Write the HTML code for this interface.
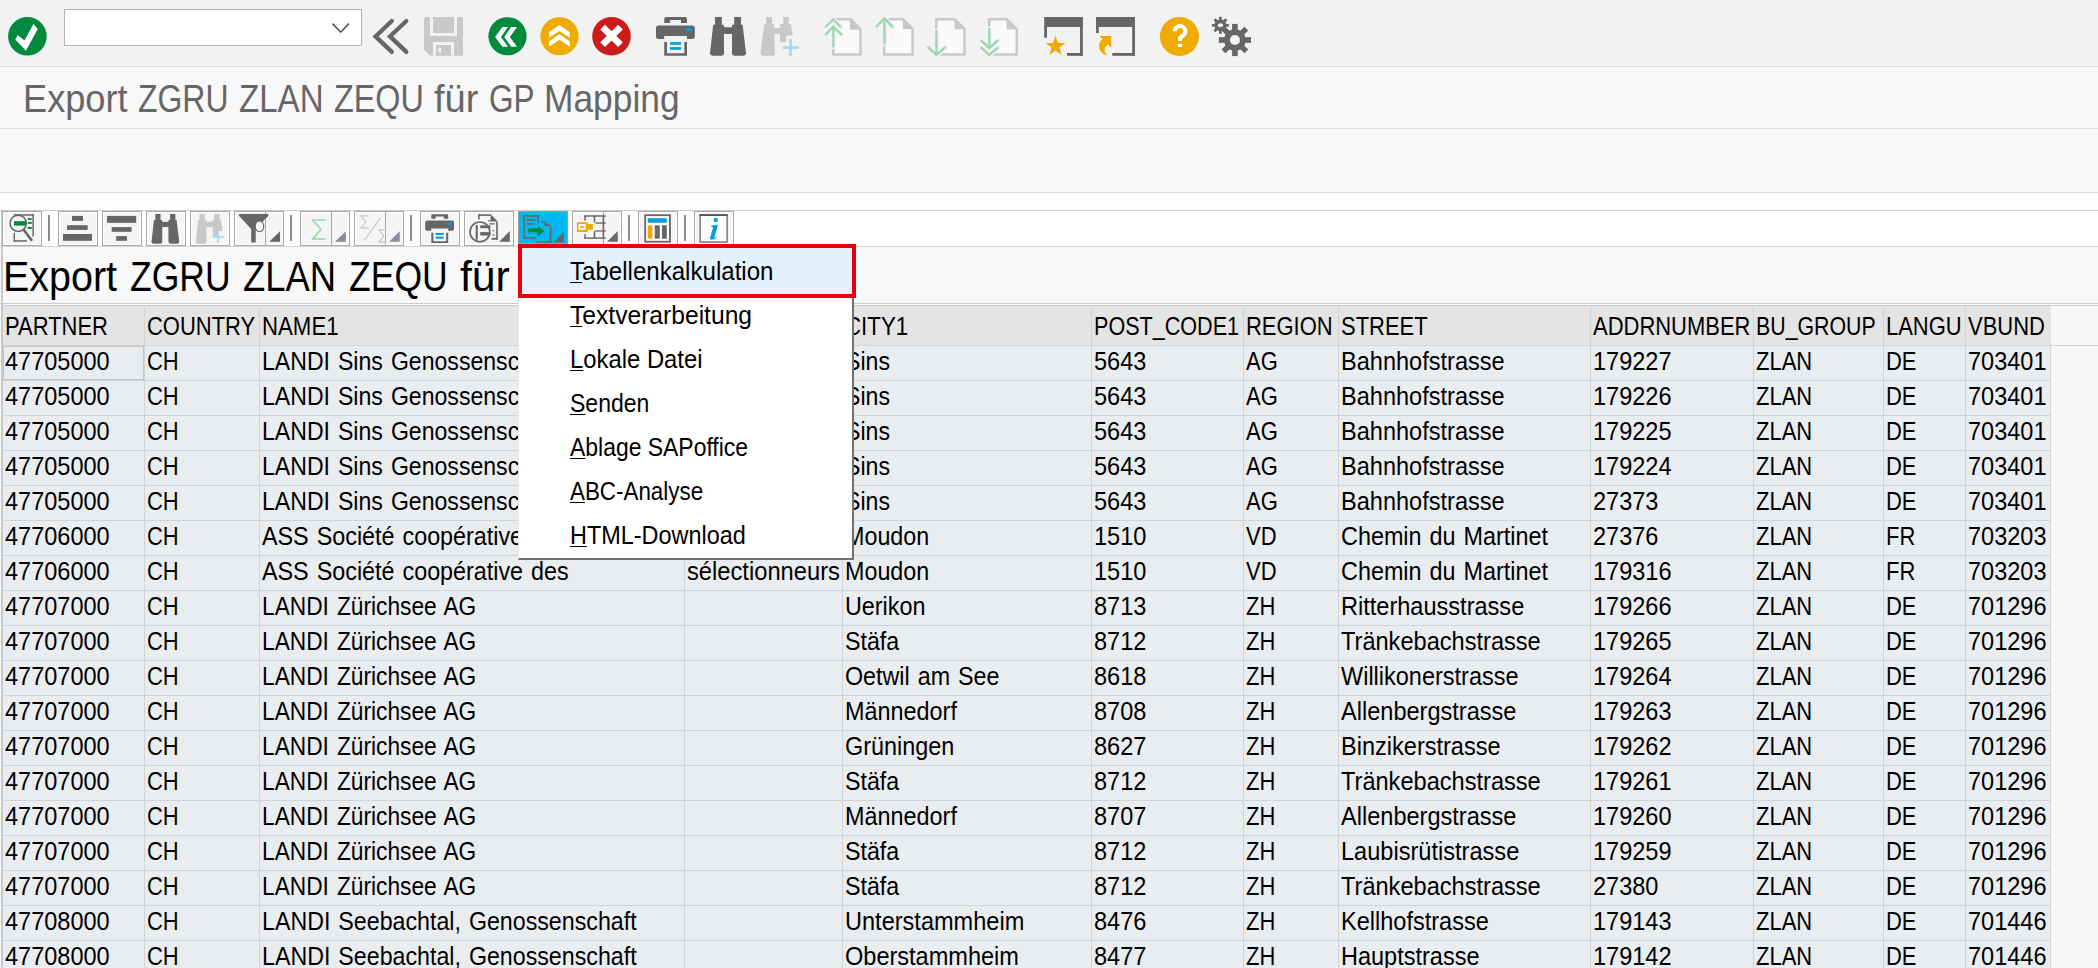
<!DOCTYPE html><html><head><meta charset="utf-8"><style>html,body{margin:0;padding:0}
body{width:2098px;height:968px;overflow:hidden;position:relative;background:#f7f7f7;font-family:"Liberation Sans",sans-serif;color:#000}
div{position:absolute;box-sizing:border-box}
#tb{left:0;top:0;width:2098px;height:67px;background:#f2f2f2;border-bottom:1px solid #dcdcdc}
#tl{left:0;top:67px;width:2098px;height:62px;background:#f8f8f8;border-bottom:1px solid #e2e2e2}
.ttl{left:22.5px;top:76.5px;font-size:37.8px;line-height:44px;color:#666;white-space:nowrap;transform:scaleX(.908);transform-origin:0 0}
#ar{left:0;top:129px;width:2098px;height:64px;background:#f8f8f8;border-bottom:1px solid #d9d9d9}
#cont{left:0;top:193px;width:2098px;height:18px;background:#fdfdfd;border-bottom:1px solid #cccccc}
#atb{left:0;top:211px;width:2098px;height:36px;background:#fff;border-bottom:1px solid #d4d4d4}
#atl{left:0;top:247px;width:2098px;height:57px;background:#f8f8f8;border-bottom:1px solid #cbcbcb;box-shadow:0 1px 0 #fbfbfb}
.attl{left:3.5px;top:253px;font-size:42px;line-height:48px;white-space:nowrap;transform:scaleX(.905);transform-origin:0 0}
#grid{left:0;top:0;width:2098px;height:968px}
.hbg{background:#e4e4e4;border-top:1px solid #cbcbcb}
.rbg{left:3px;width:2047px;height:35px;background:#eaedf0}
.vl{width:1px;background:#d3d3d3}
.hl{height:1px;background:#d3d3d3}
.hc{font-size:26px;line-height:30px;white-space:nowrap}
.hc span{display:inline-block;transform:scaleX(.84);transform-origin:0 0}
.c{font-size:26px;line-height:30px;white-space:nowrap;overflow:hidden;height:34px}
.c span{display:inline-block;transform:scaleX(.89);transform-origin:0 0}
#focus{left:3px;top:346px;width:141px;height:34px;border:1px solid #c4c4c4}
#lb{left:1px;top:211px;width:2px;height:757px;background:#c8c8c8}
#menu{left:518px;top:244px;width:336px;height:316px;background:#fff;border-left:1px solid #e8e8e8;border-right:2px solid #707070;border-bottom:2px solid #707070}
.mi{left:51px;width:280px;height:44px;padding-top:12px;font-size:26px;line-height:30px;white-space:nowrap}
.mi span{display:inline-block;transform:scaleX(.91);transform-origin:0 0}
.mi u{text-decoration-thickness:1px;text-underline-offset:2px}
#sel{left:-1px;top:0;width:338px;height:54px;border:4px solid #e5000b;background:#e5f1fa}
.btn{top:211px;height:35px;border:1px solid #a9a9a9;background:#f5f5f5;box-shadow:inset 0 0 0 1px #fff}
.sep{top:215px;width:2px;height:26px;background:#8a8a8a}
.dv{top:211px;width:1px;height:35px;background:#a9a9a9}
svg{position:absolute;left:0;top:0}
.tw{line-height:1;white-space:nowrap;transform-origin:0 0}
</style></head><body>
<div id="tb"></div><div id="tl"></div><div class="tw" style="left:22.73px;top:81.02px;font-size:37.90px;transform:scaleX(0.9552);color:#666">Export</div><div class="tw" style="left:138.28px;top:81.02px;font-size:37.90px;transform:scaleX(0.8427);color:#666">ZGRU</div><div class="tw" style="left:238.94px;top:81.02px;font-size:37.90px;transform:scaleX(0.8727);color:#666">ZLAN</div><div class="tw" style="left:333.96px;top:81.02px;font-size:37.90px;transform:scaleX(0.8541);color:#666">ZEQU</div><div class="tw" style="left:434.07px;top:81.02px;font-size:37.90px;transform:scaleX(1.0034);color:#666">für</div><div class="tw" style="left:488.62px;top:81.02px;font-size:37.90px;transform:scaleX(0.8317);color:#666">GP</div><div class="tw" style="left:543.70px;top:81.02px;font-size:37.90px;transform:scaleX(0.9331);color:#666">Mapping</div><div id="ar"></div>
<div id="cont"></div><div id="atb"></div>
<div id="atl"></div><div class="tw" style="left:3.16px;top:256.00px;font-size:41.70px;transform:scaleX(0.9469);">Export</div><div class="tw" style="left:129.86px;top:256.00px;font-size:41.70px;transform:scaleX(0.8522);">ZGRU</div><div class="tw" style="left:242.83px;top:256.00px;font-size:41.70px;transform:scaleX(0.8746);">ZLAN</div><div class="tw" style="left:348.96px;top:256.00px;font-size:41.70px;transform:scaleX(0.8527);">ZEQU</div><div class="tw" style="left:459.90px;top:256.00px;font-size:41.70px;transform:scaleX(1.0238);">für</div><div class="tw" style="left:523.32px;top:256.00px;font-size:41.70px;transform:scaleX(0.8041);">GP</div><div class="tw" style="left:582.00px;top:256.00px;font-size:41.70px;transform:scaleX(0.8773);">Mapping</div>
<div id="grid">
<div class="hbg" style="left:3px;top:305px;width:2048px;height:40px"></div><div class="hl" style="left:3px;top:305px;width:2095px;background:#cbcbcb"></div>
<div class="vl" style="left:2px;top:305px;height:40px"></div>
<div class="hc" style="left:5px;top:311px"><span style="transform:scaleX(0.8450)">PARTNER</span></div>
<div class="vl" style="left:144px;top:305px;height:40px"></div>
<div class="hc" style="left:147px;top:311px"><span style="transform:scaleX(0.8450)">COUNTRY</span></div>
<div class="vl" style="left:259px;top:305px;height:40px"></div>
<div class="hc" style="left:262px;top:311px"><span style="transform:scaleX(0.8547)">NAME1</span></div>
<div class="vl" style="left:684px;top:305px;height:40px"></div>
<div class="vl" style="left:842px;top:305px;height:40px"></div>
<div class="hc" style="left:845px;top:311px"><span style="transform:scaleX(0.8568)">CITY1</span></div>
<div class="vl" style="left:1091px;top:305px;height:40px"></div>
<div class="hc" style="left:1094px;top:311px"><span style="transform:scaleX(0.8297)">POST_CODE1</span></div>
<div class="vl" style="left:1243px;top:305px;height:40px"></div>
<div class="hc" style="left:1246px;top:311px"><span style="transform:scaleX(0.8450)">REGION</span></div>
<div class="vl" style="left:1338px;top:305px;height:40px"></div>
<div class="hc" style="left:1341px;top:311px"><span style="transform:scaleX(0.8450)">STREET</span></div>
<div class="vl" style="left:1590px;top:305px;height:40px"></div>
<div class="hc" style="left:1593px;top:311px"><span style="transform:scaleX(0.8450)">ADDRNUMBER</span></div>
<div class="vl" style="left:1753px;top:305px;height:40px"></div>
<div class="hc" style="left:1756px;top:311px"><span style="transform:scaleX(0.8207)">BU_GROUP</span></div>
<div class="vl" style="left:1883px;top:305px;height:40px"></div>
<div class="hc" style="left:1886px;top:311px"><span style="transform:scaleX(0.8450)">LANGU</span></div>
<div class="vl" style="left:1965px;top:305px;height:40px"></div>
<div class="hc" style="left:1968px;top:311px"><span style="transform:scaleX(0.8450)">VBUND</span></div>
<div class="hl" style="left:2px;top:345px;width:2096px"></div>
<div class="rbg" style="top:346px"></div>
<div class="c" style="left:5px;top:346px;width:139px"><span style="transform:scaleX(0.9050)">47705000</span></div>
<div class="c" style="left:147px;top:346px;width:112px"><span style="transform:scaleX(0.8450)">CH</span></div>
<div class="c" style="left:262px;top:346px;width:422px"><span style="transform:scaleX(0.8877);word-spacing:1.79px">LANDI Sins Genossenschaft</span></div>
<div class="c" style="left:845px;top:346px;width:246px"><span style="transform:scaleX(0.8890)">Sins</span></div>
<div class="c" style="left:1094px;top:346px;width:149px"><span style="transform:scaleX(0.9050)">5643</span></div>
<div class="c" style="left:1246px;top:346px;width:92px"><span style="transform:scaleX(0.8450)">AG</span></div>
<div class="c" style="left:1341px;top:346px;width:249px"><span style="transform:scaleX(0.9056)">Bahnhofstrasse</span></div>
<div class="c" style="left:1593px;top:346px;width:160px"><span style="transform:scaleX(0.9050)">179227</span></div>
<div class="c" style="left:1756px;top:346px;width:127px"><span style="transform:scaleX(0.8450)">ZLAN</span></div>
<div class="c" style="left:1886px;top:346px;width:79px"><span style="transform:scaleX(0.8450)">DE</span></div>
<div class="c" style="left:1968px;top:346px;width:82px"><span style="transform:scaleX(0.9050)">703401</span></div>
<div class="rbg" style="top:381px"></div>
<div class="c" style="left:5px;top:381px;width:139px"><span style="transform:scaleX(0.9050)">47705000</span></div>
<div class="c" style="left:147px;top:381px;width:112px"><span style="transform:scaleX(0.8450)">CH</span></div>
<div class="c" style="left:262px;top:381px;width:422px"><span style="transform:scaleX(0.8877);word-spacing:1.79px">LANDI Sins Genossenschaft</span></div>
<div class="c" style="left:845px;top:381px;width:246px"><span style="transform:scaleX(0.8890)">Sins</span></div>
<div class="c" style="left:1094px;top:381px;width:149px"><span style="transform:scaleX(0.9050)">5643</span></div>
<div class="c" style="left:1246px;top:381px;width:92px"><span style="transform:scaleX(0.8450)">AG</span></div>
<div class="c" style="left:1341px;top:381px;width:249px"><span style="transform:scaleX(0.9056)">Bahnhofstrasse</span></div>
<div class="c" style="left:1593px;top:381px;width:160px"><span style="transform:scaleX(0.9050)">179226</span></div>
<div class="c" style="left:1756px;top:381px;width:127px"><span style="transform:scaleX(0.8450)">ZLAN</span></div>
<div class="c" style="left:1886px;top:381px;width:79px"><span style="transform:scaleX(0.8450)">DE</span></div>
<div class="c" style="left:1968px;top:381px;width:82px"><span style="transform:scaleX(0.9050)">703401</span></div>
<div class="rbg" style="top:416px"></div>
<div class="c" style="left:5px;top:416px;width:139px"><span style="transform:scaleX(0.9050)">47705000</span></div>
<div class="c" style="left:147px;top:416px;width:112px"><span style="transform:scaleX(0.8450)">CH</span></div>
<div class="c" style="left:262px;top:416px;width:422px"><span style="transform:scaleX(0.8877);word-spacing:1.79px">LANDI Sins Genossenschaft</span></div>
<div class="c" style="left:845px;top:416px;width:246px"><span style="transform:scaleX(0.8890)">Sins</span></div>
<div class="c" style="left:1094px;top:416px;width:149px"><span style="transform:scaleX(0.9050)">5643</span></div>
<div class="c" style="left:1246px;top:416px;width:92px"><span style="transform:scaleX(0.8450)">AG</span></div>
<div class="c" style="left:1341px;top:416px;width:249px"><span style="transform:scaleX(0.9056)">Bahnhofstrasse</span></div>
<div class="c" style="left:1593px;top:416px;width:160px"><span style="transform:scaleX(0.9050)">179225</span></div>
<div class="c" style="left:1756px;top:416px;width:127px"><span style="transform:scaleX(0.8450)">ZLAN</span></div>
<div class="c" style="left:1886px;top:416px;width:79px"><span style="transform:scaleX(0.8450)">DE</span></div>
<div class="c" style="left:1968px;top:416px;width:82px"><span style="transform:scaleX(0.9050)">703401</span></div>
<div class="rbg" style="top:451px"></div>
<div class="c" style="left:5px;top:451px;width:139px"><span style="transform:scaleX(0.9050)">47705000</span></div>
<div class="c" style="left:147px;top:451px;width:112px"><span style="transform:scaleX(0.8450)">CH</span></div>
<div class="c" style="left:262px;top:451px;width:422px"><span style="transform:scaleX(0.8877);word-spacing:1.79px">LANDI Sins Genossenschaft</span></div>
<div class="c" style="left:845px;top:451px;width:246px"><span style="transform:scaleX(0.8890)">Sins</span></div>
<div class="c" style="left:1094px;top:451px;width:149px"><span style="transform:scaleX(0.9050)">5643</span></div>
<div class="c" style="left:1246px;top:451px;width:92px"><span style="transform:scaleX(0.8450)">AG</span></div>
<div class="c" style="left:1341px;top:451px;width:249px"><span style="transform:scaleX(0.9056)">Bahnhofstrasse</span></div>
<div class="c" style="left:1593px;top:451px;width:160px"><span style="transform:scaleX(0.9050)">179224</span></div>
<div class="c" style="left:1756px;top:451px;width:127px"><span style="transform:scaleX(0.8450)">ZLAN</span></div>
<div class="c" style="left:1886px;top:451px;width:79px"><span style="transform:scaleX(0.8450)">DE</span></div>
<div class="c" style="left:1968px;top:451px;width:82px"><span style="transform:scaleX(0.9050)">703401</span></div>
<div class="rbg" style="top:486px"></div>
<div class="c" style="left:5px;top:486px;width:139px"><span style="transform:scaleX(0.9050)">47705000</span></div>
<div class="c" style="left:147px;top:486px;width:112px"><span style="transform:scaleX(0.8450)">CH</span></div>
<div class="c" style="left:262px;top:486px;width:422px"><span style="transform:scaleX(0.8877);word-spacing:1.79px">LANDI Sins Genossenschaft</span></div>
<div class="c" style="left:845px;top:486px;width:246px"><span style="transform:scaleX(0.8890)">Sins</span></div>
<div class="c" style="left:1094px;top:486px;width:149px"><span style="transform:scaleX(0.9050)">5643</span></div>
<div class="c" style="left:1246px;top:486px;width:92px"><span style="transform:scaleX(0.8450)">AG</span></div>
<div class="c" style="left:1341px;top:486px;width:249px"><span style="transform:scaleX(0.9056)">Bahnhofstrasse</span></div>
<div class="c" style="left:1593px;top:486px;width:160px"><span style="transform:scaleX(0.9050)">27373</span></div>
<div class="c" style="left:1756px;top:486px;width:127px"><span style="transform:scaleX(0.8450)">ZLAN</span></div>
<div class="c" style="left:1886px;top:486px;width:79px"><span style="transform:scaleX(0.8450)">DE</span></div>
<div class="c" style="left:1968px;top:486px;width:82px"><span style="transform:scaleX(0.9050)">703401</span></div>
<div class="rbg" style="top:521px"></div>
<div class="c" style="left:5px;top:521px;width:139px"><span style="transform:scaleX(0.9050)">47706000</span></div>
<div class="c" style="left:147px;top:521px;width:112px"><span style="transform:scaleX(0.8450)">CH</span></div>
<div class="c" style="left:262px;top:521px;width:422px"><span style="transform:scaleX(0.8972);word-spacing:1.70px">ASS Société coopérative des</span></div>
<div class="c" style="left:687px;top:521px;width:155px"><span style="transform:scaleX(0.9120)">sélectionneurs</span></div>
<div class="c" style="left:845px;top:521px;width:246px"><span style="transform:scaleX(0.8966)">Moudon</span></div>
<div class="c" style="left:1094px;top:521px;width:149px"><span style="transform:scaleX(0.9050)">1510</span></div>
<div class="c" style="left:1246px;top:521px;width:92px"><span style="transform:scaleX(0.8450)">VD</span></div>
<div class="c" style="left:1341px;top:521px;width:249px"><span style="transform:scaleX(0.8992);word-spacing:1.68px">Chemin du Martinet</span></div>
<div class="c" style="left:1593px;top:521px;width:160px"><span style="transform:scaleX(0.9050)">27376</span></div>
<div class="c" style="left:1756px;top:521px;width:127px"><span style="transform:scaleX(0.8450)">ZLAN</span></div>
<div class="c" style="left:1886px;top:521px;width:79px"><span style="transform:scaleX(0.8450)">FR</span></div>
<div class="c" style="left:1968px;top:521px;width:82px"><span style="transform:scaleX(0.9050)">703203</span></div>
<div class="rbg" style="top:556px"></div>
<div class="c" style="left:5px;top:556px;width:139px"><span style="transform:scaleX(0.9050)">47706000</span></div>
<div class="c" style="left:147px;top:556px;width:112px"><span style="transform:scaleX(0.8450)">CH</span></div>
<div class="c" style="left:262px;top:556px;width:422px"><span style="transform:scaleX(0.8972);word-spacing:1.70px">ASS Société coopérative des</span></div>
<div class="c" style="left:687px;top:556px;width:155px"><span style="transform:scaleX(0.9120)">sélectionneurs</span></div>
<div class="c" style="left:845px;top:556px;width:246px"><span style="transform:scaleX(0.8966)">Moudon</span></div>
<div class="c" style="left:1094px;top:556px;width:149px"><span style="transform:scaleX(0.9050)">1510</span></div>
<div class="c" style="left:1246px;top:556px;width:92px"><span style="transform:scaleX(0.8450)">VD</span></div>
<div class="c" style="left:1341px;top:556px;width:249px"><span style="transform:scaleX(0.8992);word-spacing:1.68px">Chemin du Martinet</span></div>
<div class="c" style="left:1593px;top:556px;width:160px"><span style="transform:scaleX(0.9050)">179316</span></div>
<div class="c" style="left:1756px;top:556px;width:127px"><span style="transform:scaleX(0.8450)">ZLAN</span></div>
<div class="c" style="left:1886px;top:556px;width:79px"><span style="transform:scaleX(0.8450)">FR</span></div>
<div class="c" style="left:1968px;top:556px;width:82px"><span style="transform:scaleX(0.9050)">703203</span></div>
<div class="rbg" style="top:591px"></div>
<div class="c" style="left:5px;top:591px;width:139px"><span style="transform:scaleX(0.9050)">47707000</span></div>
<div class="c" style="left:147px;top:591px;width:112px"><span style="transform:scaleX(0.8450)">CH</span></div>
<div class="c" style="left:262px;top:591px;width:422px"><span style="transform:scaleX(0.8738);word-spacing:1.94px">LANDI Zürichsee AG</span></div>
<div class="c" style="left:845px;top:591px;width:246px"><span style="transform:scaleX(0.8980)">Uerikon</span></div>
<div class="c" style="left:1094px;top:591px;width:149px"><span style="transform:scaleX(0.9050)">8713</span></div>
<div class="c" style="left:1246px;top:591px;width:92px"><span style="transform:scaleX(0.8450)">ZH</span></div>
<div class="c" style="left:1341px;top:591px;width:249px"><span style="transform:scaleX(0.9058)">Ritterhausstrasse</span></div>
<div class="c" style="left:1593px;top:591px;width:160px"><span style="transform:scaleX(0.9050)">179266</span></div>
<div class="c" style="left:1756px;top:591px;width:127px"><span style="transform:scaleX(0.8450)">ZLAN</span></div>
<div class="c" style="left:1886px;top:591px;width:79px"><span style="transform:scaleX(0.8450)">DE</span></div>
<div class="c" style="left:1968px;top:591px;width:82px"><span style="transform:scaleX(0.9050)">701296</span></div>
<div class="rbg" style="top:626px"></div>
<div class="c" style="left:5px;top:626px;width:139px"><span style="transform:scaleX(0.9050)">47707000</span></div>
<div class="c" style="left:147px;top:626px;width:112px"><span style="transform:scaleX(0.8450)">CH</span></div>
<div class="c" style="left:262px;top:626px;width:422px"><span style="transform:scaleX(0.8738);word-spacing:1.94px">LANDI Zürichsee AG</span></div>
<div class="c" style="left:845px;top:626px;width:246px"><span style="transform:scaleX(0.8929)">Stäfa</span></div>
<div class="c" style="left:1094px;top:626px;width:149px"><span style="transform:scaleX(0.9050)">8712</span></div>
<div class="c" style="left:1246px;top:626px;width:92px"><span style="transform:scaleX(0.8450)">ZH</span></div>
<div class="c" style="left:1341px;top:626px;width:249px"><span style="transform:scaleX(0.9072)">Tränkebachstrasse</span></div>
<div class="c" style="left:1593px;top:626px;width:160px"><span style="transform:scaleX(0.9050)">179265</span></div>
<div class="c" style="left:1756px;top:626px;width:127px"><span style="transform:scaleX(0.8450)">ZLAN</span></div>
<div class="c" style="left:1886px;top:626px;width:79px"><span style="transform:scaleX(0.8450)">DE</span></div>
<div class="c" style="left:1968px;top:626px;width:82px"><span style="transform:scaleX(0.9050)">701296</span></div>
<div class="rbg" style="top:661px"></div>
<div class="c" style="left:5px;top:661px;width:139px"><span style="transform:scaleX(0.9050)">47707000</span></div>
<div class="c" style="left:147px;top:661px;width:112px"><span style="transform:scaleX(0.8450)">CH</span></div>
<div class="c" style="left:262px;top:661px;width:422px"><span style="transform:scaleX(0.8738);word-spacing:1.94px">LANDI Zürichsee AG</span></div>
<div class="c" style="left:845px;top:661px;width:246px"><span style="transform:scaleX(0.8957);word-spacing:1.71px">Oetwil am See</span></div>
<div class="c" style="left:1094px;top:661px;width:149px"><span style="transform:scaleX(0.9050)">8618</span></div>
<div class="c" style="left:1246px;top:661px;width:92px"><span style="transform:scaleX(0.8450)">ZH</span></div>
<div class="c" style="left:1341px;top:661px;width:249px"><span style="transform:scaleX(0.9036)">Willikonerstrasse</span></div>
<div class="c" style="left:1593px;top:661px;width:160px"><span style="transform:scaleX(0.9050)">179264</span></div>
<div class="c" style="left:1756px;top:661px;width:127px"><span style="transform:scaleX(0.8450)">ZLAN</span></div>
<div class="c" style="left:1886px;top:661px;width:79px"><span style="transform:scaleX(0.8450)">DE</span></div>
<div class="c" style="left:1968px;top:661px;width:82px"><span style="transform:scaleX(0.9050)">701296</span></div>
<div class="rbg" style="top:696px"></div>
<div class="c" style="left:5px;top:696px;width:139px"><span style="transform:scaleX(0.9050)">47707000</span></div>
<div class="c" style="left:147px;top:696px;width:112px"><span style="transform:scaleX(0.8450)">CH</span></div>
<div class="c" style="left:262px;top:696px;width:422px"><span style="transform:scaleX(0.8738);word-spacing:1.94px">LANDI Zürichsee AG</span></div>
<div class="c" style="left:845px;top:696px;width:246px"><span style="transform:scaleX(0.9003)">Männedorf</span></div>
<div class="c" style="left:1094px;top:696px;width:149px"><span style="transform:scaleX(0.9050)">8708</span></div>
<div class="c" style="left:1246px;top:696px;width:92px"><span style="transform:scaleX(0.8450)">ZH</span></div>
<div class="c" style="left:1341px;top:696px;width:249px"><span style="transform:scaleX(0.9060)">Allenbergstrasse</span></div>
<div class="c" style="left:1593px;top:696px;width:160px"><span style="transform:scaleX(0.9050)">179263</span></div>
<div class="c" style="left:1756px;top:696px;width:127px"><span style="transform:scaleX(0.8450)">ZLAN</span></div>
<div class="c" style="left:1886px;top:696px;width:79px"><span style="transform:scaleX(0.8450)">DE</span></div>
<div class="c" style="left:1968px;top:696px;width:82px"><span style="transform:scaleX(0.9050)">701296</span></div>
<div class="rbg" style="top:731px"></div>
<div class="c" style="left:5px;top:731px;width:139px"><span style="transform:scaleX(0.9050)">47707000</span></div>
<div class="c" style="left:147px;top:731px;width:112px"><span style="transform:scaleX(0.8450)">CH</span></div>
<div class="c" style="left:262px;top:731px;width:422px"><span style="transform:scaleX(0.8738);word-spacing:1.94px">LANDI Zürichsee AG</span></div>
<div class="c" style="left:845px;top:731px;width:246px"><span style="transform:scaleX(0.9008)">Grüningen</span></div>
<div class="c" style="left:1094px;top:731px;width:149px"><span style="transform:scaleX(0.9050)">8627</span></div>
<div class="c" style="left:1246px;top:731px;width:92px"><span style="transform:scaleX(0.8450)">ZH</span></div>
<div class="c" style="left:1341px;top:731px;width:249px"><span style="transform:scaleX(0.9054)">Binzikerstrasse</span></div>
<div class="c" style="left:1593px;top:731px;width:160px"><span style="transform:scaleX(0.9050)">179262</span></div>
<div class="c" style="left:1756px;top:731px;width:127px"><span style="transform:scaleX(0.8450)">ZLAN</span></div>
<div class="c" style="left:1886px;top:731px;width:79px"><span style="transform:scaleX(0.8450)">DE</span></div>
<div class="c" style="left:1968px;top:731px;width:82px"><span style="transform:scaleX(0.9050)">701296</span></div>
<div class="rbg" style="top:766px"></div>
<div class="c" style="left:5px;top:766px;width:139px"><span style="transform:scaleX(0.9050)">47707000</span></div>
<div class="c" style="left:147px;top:766px;width:112px"><span style="transform:scaleX(0.8450)">CH</span></div>
<div class="c" style="left:262px;top:766px;width:422px"><span style="transform:scaleX(0.8738);word-spacing:1.94px">LANDI Zürichsee AG</span></div>
<div class="c" style="left:845px;top:766px;width:246px"><span style="transform:scaleX(0.8929)">Stäfa</span></div>
<div class="c" style="left:1094px;top:766px;width:149px"><span style="transform:scaleX(0.9050)">8712</span></div>
<div class="c" style="left:1246px;top:766px;width:92px"><span style="transform:scaleX(0.8450)">ZH</span></div>
<div class="c" style="left:1341px;top:766px;width:249px"><span style="transform:scaleX(0.9072)">Tränkebachstrasse</span></div>
<div class="c" style="left:1593px;top:766px;width:160px"><span style="transform:scaleX(0.9050)">179261</span></div>
<div class="c" style="left:1756px;top:766px;width:127px"><span style="transform:scaleX(0.8450)">ZLAN</span></div>
<div class="c" style="left:1886px;top:766px;width:79px"><span style="transform:scaleX(0.8450)">DE</span></div>
<div class="c" style="left:1968px;top:766px;width:82px"><span style="transform:scaleX(0.9050)">701296</span></div>
<div class="rbg" style="top:801px"></div>
<div class="c" style="left:5px;top:801px;width:139px"><span style="transform:scaleX(0.9050)">47707000</span></div>
<div class="c" style="left:147px;top:801px;width:112px"><span style="transform:scaleX(0.8450)">CH</span></div>
<div class="c" style="left:262px;top:801px;width:422px"><span style="transform:scaleX(0.8738);word-spacing:1.94px">LANDI Zürichsee AG</span></div>
<div class="c" style="left:845px;top:801px;width:246px"><span style="transform:scaleX(0.9003)">Männedorf</span></div>
<div class="c" style="left:1094px;top:801px;width:149px"><span style="transform:scaleX(0.9050)">8707</span></div>
<div class="c" style="left:1246px;top:801px;width:92px"><span style="transform:scaleX(0.8450)">ZH</span></div>
<div class="c" style="left:1341px;top:801px;width:249px"><span style="transform:scaleX(0.9060)">Allenbergstrasse</span></div>
<div class="c" style="left:1593px;top:801px;width:160px"><span style="transform:scaleX(0.9050)">179260</span></div>
<div class="c" style="left:1756px;top:801px;width:127px"><span style="transform:scaleX(0.8450)">ZLAN</span></div>
<div class="c" style="left:1886px;top:801px;width:79px"><span style="transform:scaleX(0.8450)">DE</span></div>
<div class="c" style="left:1968px;top:801px;width:82px"><span style="transform:scaleX(0.9050)">701296</span></div>
<div class="rbg" style="top:836px"></div>
<div class="c" style="left:5px;top:836px;width:139px"><span style="transform:scaleX(0.9050)">47707000</span></div>
<div class="c" style="left:147px;top:836px;width:112px"><span style="transform:scaleX(0.8450)">CH</span></div>
<div class="c" style="left:262px;top:836px;width:422px"><span style="transform:scaleX(0.8738);word-spacing:1.94px">LANDI Zürichsee AG</span></div>
<div class="c" style="left:845px;top:836px;width:246px"><span style="transform:scaleX(0.8929)">Stäfa</span></div>
<div class="c" style="left:1094px;top:836px;width:149px"><span style="transform:scaleX(0.9050)">8712</span></div>
<div class="c" style="left:1246px;top:836px;width:92px"><span style="transform:scaleX(0.8450)">ZH</span></div>
<div class="c" style="left:1341px;top:836px;width:249px"><span style="transform:scaleX(0.9071)">Laubisrütistrasse</span></div>
<div class="c" style="left:1593px;top:836px;width:160px"><span style="transform:scaleX(0.9050)">179259</span></div>
<div class="c" style="left:1756px;top:836px;width:127px"><span style="transform:scaleX(0.8450)">ZLAN</span></div>
<div class="c" style="left:1886px;top:836px;width:79px"><span style="transform:scaleX(0.8450)">DE</span></div>
<div class="c" style="left:1968px;top:836px;width:82px"><span style="transform:scaleX(0.9050)">701296</span></div>
<div class="rbg" style="top:871px"></div>
<div class="c" style="left:5px;top:871px;width:139px"><span style="transform:scaleX(0.9050)">47707000</span></div>
<div class="c" style="left:147px;top:871px;width:112px"><span style="transform:scaleX(0.8450)">CH</span></div>
<div class="c" style="left:262px;top:871px;width:422px"><span style="transform:scaleX(0.8738);word-spacing:1.94px">LANDI Zürichsee AG</span></div>
<div class="c" style="left:845px;top:871px;width:246px"><span style="transform:scaleX(0.8929)">Stäfa</span></div>
<div class="c" style="left:1094px;top:871px;width:149px"><span style="transform:scaleX(0.9050)">8712</span></div>
<div class="c" style="left:1246px;top:871px;width:92px"><span style="transform:scaleX(0.8450)">ZH</span></div>
<div class="c" style="left:1341px;top:871px;width:249px"><span style="transform:scaleX(0.9072)">Tränkebachstrasse</span></div>
<div class="c" style="left:1593px;top:871px;width:160px"><span style="transform:scaleX(0.9050)">27380</span></div>
<div class="c" style="left:1756px;top:871px;width:127px"><span style="transform:scaleX(0.8450)">ZLAN</span></div>
<div class="c" style="left:1886px;top:871px;width:79px"><span style="transform:scaleX(0.8450)">DE</span></div>
<div class="c" style="left:1968px;top:871px;width:82px"><span style="transform:scaleX(0.9050)">701296</span></div>
<div class="rbg" style="top:906px"></div>
<div class="c" style="left:5px;top:906px;width:139px"><span style="transform:scaleX(0.9050)">47708000</span></div>
<div class="c" style="left:147px;top:906px;width:112px"><span style="transform:scaleX(0.8450)">CH</span></div>
<div class="c" style="left:262px;top:906px;width:422px"><span style="transform:scaleX(0.8924);word-spacing:1.75px">LANDI Seebachtal, Genossenschaft</span></div>
<div class="c" style="left:845px;top:906px;width:246px"><span style="transform:scaleX(0.9056)">Unterstammheim</span></div>
<div class="c" style="left:1094px;top:906px;width:149px"><span style="transform:scaleX(0.9050)">8476</span></div>
<div class="c" style="left:1246px;top:906px;width:92px"><span style="transform:scaleX(0.8450)">ZH</span></div>
<div class="c" style="left:1341px;top:906px;width:249px"><span style="transform:scaleX(0.9049)">Kellhofstrasse</span></div>
<div class="c" style="left:1593px;top:906px;width:160px"><span style="transform:scaleX(0.9050)">179143</span></div>
<div class="c" style="left:1756px;top:906px;width:127px"><span style="transform:scaleX(0.8450)">ZLAN</span></div>
<div class="c" style="left:1886px;top:906px;width:79px"><span style="transform:scaleX(0.8450)">DE</span></div>
<div class="c" style="left:1968px;top:906px;width:82px"><span style="transform:scaleX(0.9050)">701446</span></div>
<div class="rbg" style="top:941px"></div>
<div class="c" style="left:5px;top:941px;width:139px"><span style="transform:scaleX(0.9050)">47708000</span></div>
<div class="c" style="left:147px;top:941px;width:112px"><span style="transform:scaleX(0.8450)">CH</span></div>
<div class="c" style="left:262px;top:941px;width:422px"><span style="transform:scaleX(0.8924);word-spacing:1.75px">LANDI Seebachtal, Genossenschaft</span></div>
<div class="c" style="left:845px;top:941px;width:246px"><span style="transform:scaleX(0.9049)">Oberstammheim</span></div>
<div class="c" style="left:1094px;top:941px;width:149px"><span style="transform:scaleX(0.9050)">8477</span></div>
<div class="c" style="left:1246px;top:941px;width:92px"><span style="transform:scaleX(0.8450)">ZH</span></div>
<div class="c" style="left:1341px;top:941px;width:249px"><span style="transform:scaleX(0.9038)">Hauptstrasse</span></div>
<div class="c" style="left:1593px;top:941px;width:160px"><span style="transform:scaleX(0.9050)">179142</span></div>
<div class="c" style="left:1756px;top:941px;width:127px"><span style="transform:scaleX(0.8450)">ZLAN</span></div>
<div class="c" style="left:1886px;top:941px;width:79px"><span style="transform:scaleX(0.8450)">DE</span></div>
<div class="c" style="left:1968px;top:941px;width:82px"><span style="transform:scaleX(0.9050)">701446</span></div>
<div class="vl" style="left:2px;top:346px;height:622px"></div>
<div class="vl" style="left:144px;top:346px;height:622px"></div>
<div class="vl" style="left:259px;top:346px;height:622px"></div>
<div class="vl" style="left:684px;top:346px;height:622px"></div>
<div class="vl" style="left:842px;top:346px;height:622px"></div>
<div class="vl" style="left:1091px;top:346px;height:622px"></div>
<div class="vl" style="left:1243px;top:346px;height:622px"></div>
<div class="vl" style="left:1338px;top:346px;height:622px"></div>
<div class="vl" style="left:1590px;top:346px;height:622px"></div>
<div class="vl" style="left:1753px;top:346px;height:622px"></div>
<div class="vl" style="left:1883px;top:346px;height:622px"></div>
<div class="vl" style="left:1965px;top:346px;height:622px"></div>
<div class="vl" style="left:2050px;top:346px;height:622px"></div>
<div class="hl" style="left:2px;top:380px;width:2048px"></div>
<div class="hl" style="left:2px;top:415px;width:2048px"></div>
<div class="hl" style="left:2px;top:450px;width:2048px"></div>
<div class="hl" style="left:2px;top:485px;width:2048px"></div>
<div class="hl" style="left:2px;top:520px;width:2048px"></div>
<div class="hl" style="left:2px;top:555px;width:2048px"></div>
<div class="hl" style="left:2px;top:590px;width:2048px"></div>
<div class="hl" style="left:2px;top:625px;width:2048px"></div>
<div class="hl" style="left:2px;top:660px;width:2048px"></div>
<div class="hl" style="left:2px;top:695px;width:2048px"></div>
<div class="hl" style="left:2px;top:730px;width:2048px"></div>
<div class="hl" style="left:2px;top:765px;width:2048px"></div>
<div class="hl" style="left:2px;top:800px;width:2048px"></div>
<div class="hl" style="left:2px;top:835px;width:2048px"></div>
<div class="hl" style="left:2px;top:870px;width:2048px"></div>
<div class="hl" style="left:2px;top:905px;width:2048px"></div>
<div class="hl" style="left:2px;top:940px;width:2048px"></div>
<div class="hl" style="left:2px;top:975px;width:2048px"></div>
<div id="focus"></div>
</div>
<div style="left:64px;top:9px;width:298px;height:37px;background:#fff;border:1px solid #b3b3b3"></div>
<svg width="2098" height="70" viewBox="0 0 2098 70">
<circle cx="27.4" cy="36.3" r="19.3" fill="#008a3e"/>
<polygon points="17.7,35.1 24.5,40.6 33.4,23.9 37.8,29 25.9,50.8 15.3,39.5" fill="#fff"/>
<polyline points="332.6,23.6 340.7,32.2 348.9,23.6" fill="none" stroke="#555" stroke-width="1.6"/>
<g fill="none" stroke="#666" stroke-width="4.3" stroke-linecap="round" stroke-linejoin="miter">
<polyline points="391.8,21 375.5,36.4 391.8,51.9"/><polyline points="406.3,21 390,36.4 406.3,51.9"/></g>
<path d="M424,19Q424,17 426,17L461,17Q463,17 463,19L463,55.7L430,55.7L424,49.5Z" fill="#c8c8c8"/>
<rect x="430" y="17" width="27" height="19" fill="#f2f2f2"/><rect x="433" y="17" width="21" height="16" fill="#c8c8c8"/>
<rect x="433" y="42" width="21" height="13.7" fill="#f2f2f2"/><rect x="436" y="45" width="15" height="10.7" fill="#c8c8c8"/>
<rect x="438.5" y="48" width="2.5" height="4.7" fill="#f2f2f2"/>
<circle cx="507.5" cy="36.25" r="19.1" fill="#008a3e"/>
<polygon points="495.1,37 502.4,27 508,27 501,37 508,46.8 502.4,46.8" fill="#fff"/>
<polygon points="504.2,37 511.2,27 517.1,27 509.9,37 517.1,46.8 511.2,46.8" fill="#fff"/>
<circle cx="559.5" cy="36.25" r="19.1" fill="#f0ab00"/>
<polygon points="559.4,25 569.8,32.3 569.8,37.7 559.4,30.9 549.1,37.7 549.1,32.3" fill="#fff"/>
<polygon points="559.4,34.1 569.8,41.4 569.8,46.8 559.4,39.8 549.1,46.8 549.1,41.4" fill="#fff"/>
<circle cx="611.5" cy="36.25" r="19.3" fill="#cd1b1b"/>
<g stroke="#fff" stroke-width="6.75"><line x1="602.6" y1="27.1" x2="620.5" y2="44.6"/><line x1="620.5" y1="27.1" x2="602.6" y2="44.6"/></g>
<g fill="#666">
<path d="M664.2,23L664.2,19Q664.2,17 666.2,17L685,17Q687,17 687,19L687,23L681,23L681,20L670,20L670,23Z"/>
<path d="M658.5,25.4L692.3,25.4Q694.8,25.4 694.8,27.9L694.8,36.5Q694.8,39 692.3,39L687,39L687,36.1L664.2,36.1L664.2,39L658.5,39Q656,39 656,36.5L656,27.9Q656,25.4 658.5,25.4Z"/>
<path d="M664.2,41.9L667,41.9L667,53.2L684.3,53.2L684.3,41.9L687,41.9L687,55.8L664.2,55.8Z"/>
</g>
<g fill="#009de0"><rect x="686" y="28" width="6" height="3.1"/><rect x="670" y="42.1" width="11" height="2.7"/><rect x="670" y="47.1" width="11" height="2.7"/></g>
<g id="bino" fill="#666">
<rect x="715" y="17" width="6.8" height="8.5"/>
<path d="M713.2,24.8L723.9,24.8L724,53Q724,55.8 721,55.8L713,55.8Q710,55.8 710,53Z"/>
<rect x="723" y="27.2" width="10" height="6.8"/>
<rect x="734.2" y="17" width="6.8" height="8.5"/>
<path d="M732,24.8L742.6,24.8L746,53Q746,55.8 743,55.8L735,55.8Q732,55.8 732,53Z"/>
</g>
<g fill="#c8c8c8">
<rect x="766" y="17" width="6" height="7.5"/>
<path d="M764.2,24L773.9,24L775,53Q775,55.8 772,55.8L763.5,55.8Q760.5,55.8 760.5,53Z"/>
<rect x="774" y="28" width="6.5" height="6"/>
<rect x="783.3" y="17" width="5.5" height="7.5"/>
<path d="M780,24L790.8,24L792.8,35.6L786,35.6L786,41.9L780,41.9Z"/>
</g>
<g fill="#a8daf0"><rect x="789" y="39" width="3" height="16.8"/><rect x="782.8" y="46.1" width="15.7" height="2.9"/></g>
<g fill="#fafafa" stroke="#c8c8c8" stroke-width="2.5" stroke-linejoin="round">
<path d="M833.25,19.25L850.5,19.25L860.5,29.2L860.5,54.5L833.25,54.5Z"/>
<path d="M884.25,19.25L902.8,19.25L912.6,29L912.6,54.5L884.25,54.5Z"/>
<path d="M936.25,19.25L954.5,19.25L964.5,29L964.5,54.5L936.25,54.5Z"/>
<path d="M989.25,19.25L1006.5,19.25L1016.8,29.2L1016.8,54.5L989.25,54.5Z"/>
</g>
<g fill="#c8c8c8">
<polygon points="850,18 861.7,29.7 850,29.7"/><polygon points="902.8,18 913.8,29 902.8,29"/>
<polygon points="954.5,18 965.7,29.2 954.5,29.2"/><polygon points="1006.5,18 1018,29.5 1006.5,29.5"/>
</g>
<g fill="none" stroke="#f2f2f2" stroke-width="5.5" stroke-linecap="round">
<path d="M825.8,26.7L833.4,19.3L840.5,26.7M825.8,34.5L833.4,26.7L841.3,34.5M833.4,26.7L833.4,46.6"/>
<path d="M876.4,26.6L884.5,18.5L892.5,26.6M884.5,19L884.5,43.5"/>
<path d="M928.3,47.4L936.4,54.9L944.9,47.4M936.4,30.9L936.4,54.9"/>
<path d="M981.4,40.7L989.3,48.2L997.6,40.7M981.4,47.8L989.3,54.9L997.6,47.8M989.3,28.9L989.3,48.2"/>
</g>
<g fill="none" stroke="#9fd4b4" stroke-width="2.3" stroke-linecap="round">
<path d="M825.8,26.7L833.4,19.3L840.5,26.7M825.8,34.5L833.4,26.7L841.3,34.5M833.4,26.7L833.4,46.6"/>
<path d="M876.4,26.6L884.5,18.5L892.5,26.6M884.5,19L884.5,43.5"/>
<path d="M928.3,47.4L936.4,54.9L944.9,47.4M936.4,30.9L936.4,54.9"/>
<path d="M981.4,40.7L989.3,48.2L997.6,40.7M981.4,47.8L989.3,54.9L997.6,47.8M989.3,28.9L989.3,48.2"/>
</g>
<g fill="#666">
<rect x="1044.2" y="17" width="38.6" height="10"/><rect x="1044.2" y="26" width="2.8" height="11.7"/>
<rect x="1080" y="17" width="2.8" height="38.8"/><rect x="1067" y="53" width="15.8" height="2.8"/>
<rect x="1096" y="17" width="39" height="10"/><rect x="1096" y="26" width="2.8" height="7"/>
<rect x="1132.2" y="17" width="2.8" height="38.8"/><rect x="1112.3" y="53" width="22.7" height="2.8"/>
</g>
<polygon fill="#f0ab00" points="1055.5,35.6 1058,43 1065.4,43.1 1059.5,47.6 1061.6,55 1055.5,50.6 1049.4,55 1051.5,47.6 1045.6,43.1 1053,43"/>
<path fill="#f0ab00" d="M1099.2,36.1L1111.1,36.1L1111.3,47.7L1107.6,44.2Q1103,48.5 1105.5,53L1107.6,55.5Q1099,53.5 1099,46Q1099,41.5 1102.6,39.3Z"/>
<circle cx="1179.4" cy="36.4" r="19.5" fill="#f0ab00"/>
<path d="M1174.9,31.3A5.2,5.2 0 1 1 1184.1,34.6L1180.1,37.8L1180.1,40.9" fill="none" stroke="#fff" stroke-width="4.1" stroke-linejoin="round"/>
<rect x="1177.9" y="43.8" width="4.3" height="3.2" fill="#fff"/>
<g fill="#666">
<circle cx="1234.9" cy="40" r="10.8"/>
<g transform="translate(1234.9 40)"><rect x="-2.8" y="-16.1" width="5.6" height="32.2"/><rect x="-2.8" y="-16.1" width="5.6" height="32.2" transform="rotate(45)"/><rect x="-2.8" y="-16.1" width="5.6" height="32.2" transform="rotate(90)"/><rect x="-2.8" y="-16.1" width="5.6" height="32.2" transform="rotate(135)"/></g>
<circle cx="1220.4" cy="25.3" r="6"/>
<g transform="translate(1220.4 25.3)"><rect x="-1.35" y="-8.5" width="2.7" height="17"/><rect x="-1.35" y="-8.5" width="2.7" height="17" transform="rotate(45)"/><rect x="-1.35" y="-8.5" width="2.7" height="17" transform="rotate(90)"/><rect x="-1.35" y="-8.5" width="2.7" height="17" transform="rotate(135)"/></g>
</g>
<circle cx="1234.9" cy="40" r="5.1" fill="#f2f2f2"/>
<ellipse cx="1220.4" cy="25.3" rx="2.7" ry="2" fill="#f2f2f2"/>
</svg>

<div id="lb"></div>
<div class="btn" style="left:2px;width:40px"></div>
<div class="sep" style="left:48px"></div>
<div class="btn" style="left:58px;width:40px"></div>
<div class="btn" style="left:102px;width:40px"></div>
<div class="btn" style="left:146px;width:40px"></div>
<div class="btn" style="left:190px;width:40px"></div>
<div class="btn" style="left:234px;width:50px"></div><div class="dv" style="left:265px"></div>
<div class="sep" style="left:290px"></div>
<div class="btn" style="left:300px;width:50px"></div><div class="dv" style="left:331px"></div>
<div class="btn" style="left:354px;width:50px"></div><div class="dv" style="left:385px"></div>
<div class="sep" style="left:410px"></div>
<div class="btn" style="left:420px;width:40px"></div>
<div class="btn" style="left:464px;width:50px"></div>
<div class="btn" style="left:518px;width:50px;height:33px;background:#00b9f2;border-color:#9c9c9c;box-shadow:none"></div>
<div class="btn" style="left:572px;width:50px"></div><div class="dv" style="left:603px"></div>
<div class="sep" style="left:628px"></div>
<div class="btn" style="left:638px;width:40px"></div>
<div class="sep" style="left:684px"></div>
<div class="btn" style="left:694px;width:40px"></div>
<svg width="800" height="250" viewBox="0 0 800 250">
<!-- details -->
<g fill="#666">
<rect x="13.6" y="214.2" width="20.3" height="1.5"/><rect x="32.4" y="214.2" width="1.5" height="22.3"/>
<rect x="13.6" y="240.2" width="13.3" height="1.5"/><rect x="13.6" y="232.8" width="1.4" height="8.9"/>
</g>
<circle cx="18.2" cy="223.3" r="8.1" fill="#f5f5f5" stroke="#666" stroke-width="1.5"/>
<line x1="23.5" y1="229.5" x2="32" y2="240.8" stroke="#666" stroke-width="2.6"/>
<g fill="#008a3e"><rect x="14" y="221.2" width="12" height="4.4"/><rect x="27.7" y="218.1" width="4.1" height="1.7"/><rect x="27.7" y="222" width="4.1" height="1.9"/><rect x="27.7" y="227" width="4.1" height="1.9"/></g>
<!-- sort -->
<g fill="#666">
<rect x="72" y="215.9" width="11" height="5"/><rect x="67.1" y="225.2" width="20.6" height="4.7"/><rect x="63" y="234" width="29" height="6.8"/>
<rect x="107" y="215.9" width="29.2" height="6.9"/><rect x="111.7" y="227.1" width="19.9" height="4.7"/><rect x="116.2" y="236.1" width="10.7" height="4.7"/>
</g>
<!-- find -->
<g transform="translate(-395.2 200.9) scale(0.77)" fill="#666">
<rect x="715" y="17" width="6.8" height="8.5"/>
<path d="M713.2,24.8L723.9,24.8L724,53Q724,55.8 721,55.8L713,55.8Q710,55.8 710,53Z"/>
<rect x="723" y="27.2" width="10" height="6.8"/>
<rect x="734.2" y="17" width="6.8" height="8.5"/>
<path d="M732,24.8L742.6,24.8L746,53Q746,55.8 743,55.8L735,55.8Q732,55.8 732,53Z"/>
</g>
<g transform="translate(-351 200.9) scale(0.77)" fill="#c8c8c8">
<rect x="715" y="17" width="6.8" height="8.5"/>
<path d="M713.2,24.8L723.9,24.8L724,53Q724,55.8 721,55.8L713,55.8Q710,55.8 710,53Z"/>
<rect x="723" y="27.2" width="10" height="6.8"/>
<rect x="734.2" y="17" width="6.8" height="8.5"/>
<path d="M732,24.8L742.6,24.8L745,39L739,39L739,47L732,47Z"/>
</g>
<g fill="#a8daf0"><rect x="217.3" y="231.2" width="1.8" height="11.5"/><rect x="212.2" y="236" width="11.8" height="1.8"/></g>
<!-- filter -->
<path d="M238.9,214L268.3,214L268.3,215.7L255.7,228.9L255.7,242.6L251.2,242.6L251.2,228.9L238.9,215.7Z" fill="#666"/>
<ellipse cx="259.5" cy="226.3" rx="4.3" ry="5.4" fill="#f5f5f5" stroke="#666" stroke-width="1.1"/>
<g fill="#666"><polygon points="280,231.2 280,241.8 269.2,241.8"/></g>
<!-- sum -->
<polyline points="325.8,220 312.8,220 321,229.5 312.8,239 325.8,239" fill="none" stroke="#9fd4b4" stroke-width="1.7"/>
<polygon points="345.8,231.2 345.8,241.8 335,241.8" fill="#868b95"/>
<!-- subtotal -->
<g fill="none" stroke="#c8c8c8" stroke-width="1.2">
<polyline points="368.8,215.9 360.8,215.9 365.9,221.9 360.8,227.9 368.8,227.9"/>
<line x1="364.3" y1="240.5" x2="380.8" y2="217.4"/>
<polyline points="386.6,229.8 379,229.8 383.7,235.8 379,242.1 386.6,242.1"/>
</g>
<polygon points="399.7,231.3 399.7,241.8 389.2,241.8" fill="#868b95"/>
<!-- print -->
<g transform="translate(-61.55 201.7) scale(0.742)">
<g fill="#666">
<path d="M664.2,23L664.2,19Q664.2,17 666.2,17L685,17Q687,17 687,19L687,23L681,23L681,20L670,20L670,23Z"/>
<path d="M658.5,25.4L692.3,25.4Q694.8,25.4 694.8,27.9L694.8,36.5Q694.8,39 692.3,39L687,39L687,36.1L664.2,36.1L664.2,39L658.5,39Q656,39 656,36.5L656,27.9Q656,25.4 658.5,25.4Z"/>
<path d="M664.2,41.9L667,41.9L667,53.2L684.3,53.2L684.3,41.9L687,41.9L687,55.8L664.2,55.8Z"/>
</g>
<g fill="#009de0"><rect x="686" y="28" width="6" height="3.1"/><rect x="670" y="42.1" width="11" height="2.7"/><rect x="670" y="47.1" width="11" height="2.7"/></g>
</g>
<!-- view -->
<g fill="#666">
<rect x="478.1" y="214.3" width="12.8" height="1.6"/><rect x="478.1" y="214.3" width="1.6" height="5"/>
<polygon points="490.6,214.3 497.8,221.6 490.6,221.6"/>
<rect x="496.2" y="221.6" width="1.6" height="18"/><rect x="491.5" y="237.9" width="6.3" height="1.8"/>
<rect x="488" y="220.3" width="3.5" height="1.1"/><rect x="489.5" y="223.2" width="5.2" height="1.3"/>
<rect x="492.5" y="230.3" width="2" height="1.1"/><rect x="492.5" y="234.2" width="2" height="1.3"/>
</g>
<circle cx="479.9" cy="231.9" r="9.9" fill="none" stroke="#666" stroke-width="1.6"/>
<g fill="#666"><rect x="475.7" y="225" width="2.1" height="14.7"/><rect x="480.2" y="225.3" width="10.2" height="2.9"/><rect x="480.2" y="232.1" width="10.2" height="3.4"/></g>
<polygon points="509.8,231.1 509.8,241.8 499.3,241.8" fill="#666"/>
<!-- export -->
<g fill="#666">
<rect x="523.2" y="215.1" width="15.7" height="1.6"/><rect x="523.2" y="215.1" width="1.6" height="23.6"/>
<rect x="537.3" y="215.1" width="1.6" height="7.3"/><rect x="523.2" y="237.1" width="12.3" height="1.6"/>
<rect x="526.6" y="219" width="8.9" height="1.8"/><rect x="526.6" y="223.2" width="7.1" height="1.6"/>
<rect x="541.3" y="221.4" width="4.7" height="1.3"/><polygon points="544.4,221.4 551.5,226.1 544.4,226.1"/>
<rect x="549.9" y="226.1" width="1.6" height="16.5"/><rect x="536" y="241" width="15.5" height="1.6"/>
</g>
<path d="M528.2,228.2L537.6,228.2L537.6,225.8L544.7,230.9L537.6,236.3L537.6,232.6L528.2,232.6Z" fill="#008a3e"/>
<polygon points="563.8,232.1 563.8,242.6 553.3,242.6" fill="#666"/>
<!-- layout -->
<g fill="#666">
<rect x="584.3" y="215.3" width="21.5" height="1.4"/><rect x="584.3" y="215.3" width="1.5" height="5.3"/>
<rect x="584.3" y="234.2" width="1.5" height="4.5"/><rect x="584.3" y="237.4" width="21.5" height="1.4"/>
<rect x="593.7" y="215.3" width="1.6" height="7"/><rect x="593.7" y="231" width="1.6" height="7.5"/>
<rect x="602.6" y="215.3" width="1.6" height="23.4"/>
<rect x="595.3" y="222.4" width="10.5" height="1.3"/><rect x="595.3" y="230.3" width="10.5" height="1.3"/>
</g>
<g fill="#f0ab00">
<path d="M576.9,222.2L587.7,222.2L587.7,224L592.9,224L592.9,229.8L587.7,229.8L587.7,231.9L576.9,231.9Z M578.5,224L578.5,230L585.8,230L585.8,224Z" fill-rule="evenodd"/>
<rect x="580.3" y="226.1" width="3.4" height="1.8"/>
</g>
<polygon points="617.8,231.1 617.8,241.8 607,241.8" fill="#666"/>
<!-- grid -->
<rect x="645.2" y="215.2" width="24.7" height="26.5" fill="#fff" stroke="#666" stroke-width="1.8"/>
<rect x="647.7" y="218.2" width="19.1" height="4.5" fill="#009de0"/>
<rect x="647.7" y="225.3" width="4.7" height="13.4" fill="#f0ab00"/>
<rect x="654.8" y="225.3" width="5" height="13.4" fill="#666"/><rect x="661.9" y="225.3" width="4.9" height="13.4" fill="#666"/>
<!-- info -->
<rect x="700.1" y="215" width="27" height="27" fill="#fff" stroke="#666" stroke-width="1.3"/>
<rect x="699.5" y="214.2" width="28.1" height="1.8" fill="#555"/>
<circle cx="715.7" cy="220" r="2.2" fill="#009de0"/>
<path d="M711.5,225.6L718,224.8L714.4,237.6Q714.2,238.6 716.8,236.6L716.6,237.8Q713.5,240.2 711,239.8Q709.6,239.3 710.2,237.4L713,228Q713.3,226.6 711.3,227Z" fill="#009de0"/>
</svg>

<div id="menu"><div id="sel"></div>
<div class="mi" style="top:0px"><span style="transform:scaleX(0.926)"><u>T</u>abellenkalkulation</span></div>
<div class="mi" style="top:44px"><span style="transform:scaleX(0.947)"><u>T</u>extverarbeitung</span></div>
<div class="mi" style="top:88px"><span style="transform:scaleX(0.917)"><u>L</u>okale Datei</span></div>
<div class="mi" style="top:132px"><span style="transform:scaleX(0.886)"><u>S</u>enden</span></div>
<div class="mi" style="top:176px"><span style="transform:scaleX(0.882)"><u>A</u>blage SAPoffice</span></div>
<div class="mi" style="top:220px"><span style="transform:scaleX(0.861)"><u>A</u>BC-Analyse</span></div>
<div class="mi" style="top:264px"><span style="transform:scaleX(0.901)"><u>H</u>TML-Download</span></div>
</div>
</body></html>
